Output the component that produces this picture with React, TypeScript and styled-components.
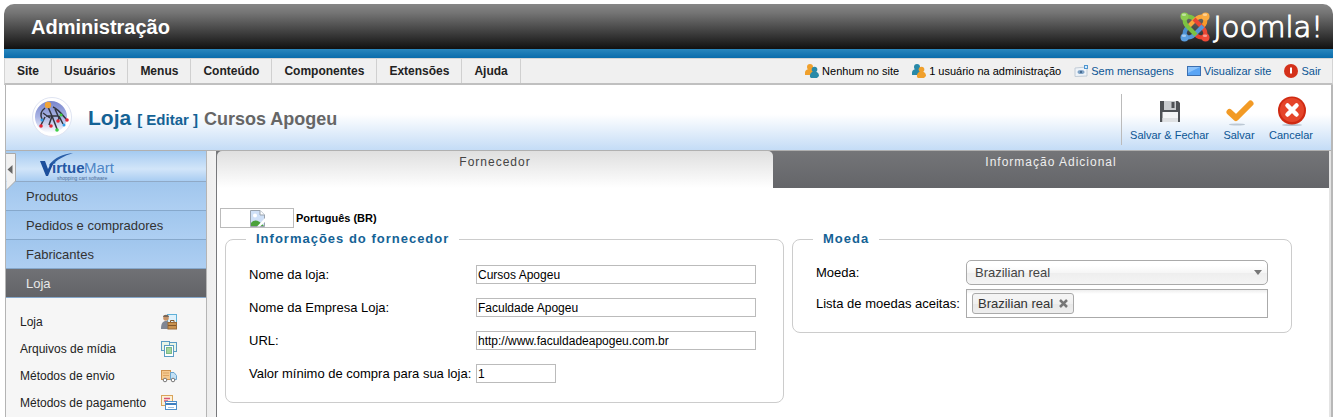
import React from "react";
import styled, { createGlobalStyle, css } from "styled-components";

const GlobalStyle = createGlobalStyle`
  *, *::before, *::after { box-sizing: border-box; }
  body {
    margin: 0;
    background: #fff;
    color: #000;
    font: 13px/18px "Liberation Sans", Arial, sans-serif;
  }
  button, input, select { font: inherit; color: inherit; margin: 0; }
  a { text-decoration: none; color: inherit; }
`;

const Page = styled.div`
  display: flex;
  flex-direction: column;
  min-height: 100vh;
  padding: 4px 1px 0 4px;
`;

const Banner = styled.header`
  display: flex;
  align-items: center;
  justify-content: space-between;
  height: 45px;
  padding: 0 10px 0 27px;
  border-radius: 10px 10px 0 0;
  background: linear-gradient(#868686, #747474 20%, #111);
`;

const SiteName = styled.h1`
  margin: 0;
  color: #fff;
  font-size: 20px;
  line-height: 24px;
`;

const JoomlaBrand = styled.a`
  display: flex;
  align-items: center;
  gap: 3px;
  color: #fff;
`;

const Wordmark = styled.span`
  font: 200 29px/32px "DejaVu Sans", sans-serif;
  -webkit-text-stroke: 1px #fff;
`;

const BlueStripe = styled.div`
  height: 9px;
  background: linear-gradient(#2a86bd, #0a6cab);
`;

const MenuBar = styled.div`
  display: flex;
  justify-content: space-between;
  height: 27px;
  border: 1px solid #d4d4d4;
  border-bottom: 2px solid #c0c0c0;
  background: #f0f0f0;
`;

const Menu = styled.nav`
  display: flex;
`;

const MenuItem = styled.button`
  padding: 0 12px;
  border: 0;
  border-right: 1px solid #d0d0d0;
  background: none;
  color: #222;
  font-size: 12px;
  font-weight: bold;
`;

const StatusList = styled.div`
  display: flex;
  align-items: center;
  gap: 13px;
  padding-right: 11px;
  font-size: 11px;
`;

const statusItem = css`
  display: flex;
  align-items: center;
  gap: 3px;
`;

const StatusText = styled.span`
  ${statusItem}
`;

const StatusLink = styled.a`
  ${statusItem}
  color: #0b5594;
`;

const Frame = styled.main`
  display: flex;
  flex: 1;
  flex-direction: column;
  margin-left: 1px;
  border-left: 1px solid #b4b4b4;
  border-right: 2px solid #b8b8b8;
`;

const TitleBar = styled.div`
  display: flex;
  align-items: center;
  justify-content: space-between;
  height: 66px;
  padding: 0 12px 0 24px;
  border-bottom: 1px solid #b0b0b0;
  border-radius: 6px 6px 0 0;
  background: linear-gradient(#fff 45%, #c4dcf6);
`;

const TitleGroup = styled.div`
  display: flex;
  align-items: center;
  gap: 14px;
`;

const Title = styled.h2`
  display: flex;
  align-items: baseline;
  gap: 6px;
  margin: 0;
  padding-top: 2px;
  color: #146295;
  font-size: 21px;
  line-height: 28px;
`;

const TitleAction = styled.small`
  font-size: 15px;
`;

const TitleName = styled.span`
  color: #666;
  font-size: 18px;
`;

const Toolbar = styled.div`
  display: flex;
  gap: 2px;
  height: 51px;
  margin-top: 3px;
  padding-left: 2px;
  border-left: 1px solid #bbb;
`;

const Tool = styled.button`
  display: flex;
  flex-direction: column;
  align-items: center;
  padding: 2px 6px;
  border: 0;
  background: none;
  color: #0b5594;
  font-size: 11px;
  line-height: 14px;
`;

const Body = styled.div`
  display: flex;
  flex: 1;
  border-right: 2px solid #e4e4e4;
`;

const Sidebar = styled.aside`
  position: relative;
  flex: 0 0 201px;
  border-right: 1px solid #b5b5b5;
  background: #f6f6f6;
`;

const CollapseHandle = styled.button`
  position: absolute;
  top: 2px;
  left: 0;
  padding: 0;
  border: 0;
  background: none;
  line-height: 0;
`;

const VmBrand = styled.div`
  height: 31px;
  padding-left: 33px;
  border-bottom: 1px solid #8fa9c6;
  background: linear-gradient(#a4caf1, #d2e5f9 60%, #a9cdf2);
`;

const Section = styled.a<{ $active?: boolean }>`
  display: block;
  height: 29px;
  padding-left: 20px;
  border-bottom: 1px solid #86a8cb;
  background: ${(p) =>
    p.$active
      ? "linear-gradient(#707175, #626367)"
      : "linear-gradient(#a0c6ed, #aecff2)"};
  color: ${(p) => (p.$active ? "#e8e8e8" : "#333")};
  line-height: 30px;
`;

const SubMenu = styled.ul`
  margin: 0;
  padding: 10px 29px 0 14px;
  list-style: none;
`;

const SubLink = styled.a`
  display: flex;
  align-items: center;
  justify-content: space-between;
  height: 27px;
  color: #222;
  font-size: 12px;
  white-space: nowrap;
`;

const Gutter = styled.div`
  flex: 0 0 10px;
  border-right: 1px solid #77787b;
  background: linear-gradient(90deg, #eee, #f2f2f2);
`;

const Content = styled.section`
  flex: 1;
  min-width: 0;
`;

const Tabs = styled.div`
  display: grid;
  grid-template-columns: 1fr 1fr;
  height: 37px;
  background: linear-gradient(#747578, #646569);
`;

const Tab = styled.button<{ $active?: boolean }>`
  display: flex;
  justify-content: center;
  padding: 2px 0 0;
  border: 0;
  border-radius: 5px 5px 0 0;
  background: ${(p) =>
    p.$active ? "linear-gradient(#dfdfdf, #fff)" : "none"};
  color: ${(p) => (p.$active ? "#444" : "#eee")};
  font-size: 12px;
  letter-spacing: 1px;
`;

const Language = styled.div`
  display: flex;
  align-items: center;
  gap: 2px;
  height: 20px;
  margin: 20px 0 0 3px;
  font-size: 11px;
`;

const Flag = styled.span`
  display: flex;
  align-items: flex-end;
  justify-content: center;
  width: 74px;
  height: 20px;
  border: 1px solid #bbb;
`;

const Groups = styled.div`
  display: grid;
  grid-template-columns: 559fr 500fr;
  align-items: start;
  gap: 8px;
  padding: 2px 37px 14px 8px;
`;

const Group = styled.fieldset<{ $compact?: boolean }>`
  min-width: 0;
  margin: 0;
  padding: ${(p) => (p.$compact ? "9px 23px 13px" : "10px 23px 12px")};
  border: 1px solid #ccc;
  border-radius: 8px;
`;

const GroupTitle = styled.legend`
  margin-left: -3px;
  padding: 0 10px;
  color: #146295;
  font-weight: bold;
  letter-spacing: 1px;
`;

const Field = styled.div<{ $labelWidth: number; $height: number }>`
  display: grid;
  grid-template-columns: ${(p) => p.$labelWidth}px 1fr;
  align-items: center;
  height: ${(p) => p.$height}px;
  white-space: nowrap;
`;

const TextBox = styled.input<{ $short?: boolean }>`
  width: ${(p) => (p.$short ? "80px" : "100%")};
  max-width: 280px;
  height: 19px;
  padding: 0 1px;
  border: 1px solid #bbb;
  border-radius: 0;
  background: #fff;
  font-size: 12px;
`;

const SelectWrap = styled.div`
  position: relative;

  svg {
    position: absolute;
    top: 10px;
    right: 6px;
    pointer-events: none;
  }
`;

const Select = styled.select`
  display: block;
  width: 100%;
  height: 25px;
  padding: 0 8px;
  border: 1px solid #aaa;
  border-radius: 5px;
  appearance: none;
  background: linear-gradient(#fff 20%, #f6f6f6 50%, #eee 52%, #f4f4f4);
  color: #444;
`;

const TokenBox = styled.div`
  display: flex;
  align-items: center;
  gap: 4px;
  height: 29px;
  padding: 0 5px;
  border: 1px solid #aaa;
  background: linear-gradient(#eee, #fff 15%);
`;

const Token = styled.span`
  display: flex;
  align-items: center;
  gap: 6px;
  height: 21px;
  padding: 0 5px;
  border: 1px solid #aaa;
  border-radius: 3px;
  background: linear-gradient(#f4f4f4 20%, #f0f0f0 50%, #e8e8e8 52%, #eee);
  color: #333;
`;

const RemoveToken = styled.button`
  padding: 0;
  border: 0;
  background: none;
  line-height: 0;
`;

const TokenInput = styled.input`
  flex: 1;
  min-width: 0;
  border: 0;
  outline: 0;
  background: none;
`;

const JoomlaMark = () => (
  <svg width="30" height="30" viewBox="0 0 30 30" fill="none" strokeWidth="4.200" strokeLinejoin="round">
    <path d="M5 5 C10 4 12 5 15 8" stroke="#7cc242" />
    <path d="M25 5 C26 10 25 12 22 15" stroke="#f79a2b" />
    <path d="M25 25 C20 26 18 25 15 22" stroke="#e8432f" />
    <path d="M5 25 C4 20 5 18 8 15" stroke="#4b8fd0" />
    <path d="M25 5 C20 4 18 5 15 8 L7 16" stroke="#fba53a" />
    <path d="M25 25 C26 20 25 18 22 15 L14 7" stroke="#ea4733" />
    <path d="M5 25 C10 26 12 25 15 22 L23 14" stroke="#5596d8" />
    <path d="M5 5 C4 10 5 12 8 15 L16 23" stroke="#7cc242" />
    <circle cx="4.500" cy="4.500" r="4" fill="#8ccb50" />
    <circle cx="25.500" cy="4.500" r="4" fill="#fbab41" />
    <circle cx="4.500" cy="25.500" r="4" fill="#5a9ee0" />
    <circle cx="25.500" cy="25.500" r="4" fill="#ee4a38" />
    <g fill="#fff" opacity=".45">
      <ellipse cx="4" cy="2.800" rx="2.200" ry="1.200" />
      <ellipse cx="25" cy="2.800" rx="2.200" ry="1.200" />
      <ellipse cx="4" cy="23.800" rx="2.200" ry="1.200" />
      <ellipse cx="25" cy="23.800" rx="2.200" ry="1.200" />
    </g>
  </svg>
);

const Users = ({ back, front }: { back: string; front: string }) => (
  <svg width="14" height="14" viewBox="0 0 14 14">
    <circle cx="5" cy="3" r="3" fill={back} />
    <path d="M0 11 V9 C0 6 2 5 5 5 C8 5 9 7 9 9 V11Z" fill={back} />
    <circle cx="9.500" cy="5.500" r="2.800" fill={front} />
    <path d="M5 13 C4.500 9 7 7.500 9.500 7.500 C13 7.500 14 10 14 12 L12 14 H6Z" fill={front} />
  </svg>
);

const Mail = () => (
  <svg width="14" height="14" viewBox="0 0 14 14">
    <path d="M1 4 L13 3 L13 12 L1 12.500Z" fill="#eef3f8" stroke="#c2ccd6" />
    <ellipse cx="7" cy="8" rx="3.500" ry="2" fill="#7fa3c6" />
    <circle cx="7" cy="8" r="1" fill="#35597e" />
    <rect x="10.500" y="1.500" width="3" height="3" fill="#d6ecff" stroke="#4f97d0" />
  </svg>
);

const Screen = () => (
  <svg width="14" height="14" viewBox="0 0 14 14">
    <rect x=".5" y="2.500" width="13" height="9" fill="#5aa5f5" stroke="#3b6fb0" />
    <path d="M1 3 H13 L1 9Z" fill="#8cc3fb" />
  </svg>
);

const Power = () => (
  <svg width="14" height="14" viewBox="0 0 14 14">
    <circle cx="7" cy="7" r="7" fill="#d4311a" />
    <path d="M7 3.500 V9.500" stroke="#fff" strokeWidth="2" />
  </svg>
);

const StoreEmblem = () => (
  <svg width="44" height="44" viewBox="0 0 44 44">
    <defs>
      <linearGradient id="disc" x1="0" y1="0" x2="0" y2="1">
        <stop offset="0" stopColor="#7885cc" />
        <stop offset=".5" stopColor="#a9b4e4" />
        <stop offset="1" stopColor="#fff" />
      </linearGradient>
    </defs>
    <circle cx="22" cy="21" r="19.500" fill="#fff" stroke="#dfe4f2" />
    <circle cx="21" cy="21" r="16" fill="url(#disc)" />
    <g fill="none" stroke="#33353f" strokeWidth="1.500">
      <path d="M18 11 L22 20 L19 29 M22 20 L27 33 M15 12 C11 15 10 19 12 23 M13 17 L20 22 M15 21 L11 29 M23 11 C28 13 31 17 36 23 M25 13 L29 22 L28 25 M29 20 L33 28 M16 20 L28 20" />
    </g>
    <circle cx="18" cy="9" r="3.200" fill="#f0a437" />
    <g fill="#e32636">
      <circle cx="11" cy="30" r="1.800" />
      <circle cx="21" cy="30" r="1.800" />
      <circle cx="28" cy="25" r="1.800" />
      <circle cx="37" cy="24" r="1.800" />
    </g>
    <g fill="#2f9be8">
      <circle cx="12" cy="24" r="1.500" />
      <circle cx="34" cy="29" r="1.500" />
    </g>
    <g fill="#3fcf46">
      <circle cx="31" cy="19" r="1.600" />
      <circle cx="27" cy="34" r="1.800" />
    </g>
  </svg>
);

const Floppy = () => (
  <svg width="32" height="32" viewBox="0 0 32 32">
    <path d="M6 5 H24 L26 7 V26 H6Z" fill="#4e5155" />
    <path d="M10 5 H22 V14 H10Z" fill="#c9cccf" />
    <path d="M17.500 6 H20.500 V12 H17.500Z" fill="#4e5155" />
    <path d="M8.500 16 H24 V26 H8.500Z" fill="#f4f5f6" />
    <path d="M8.500 22 H24 V26 H8.500Z" fill="#dfe1e3" />
  </svg>
);

const Check = () => (
  <svg width="32" height="32" viewBox="0 0 32 32">
    <ellipse cx="14" cy="28.500" rx="8" ry="1" fill="#bcc8d4" />
    <path d="M6.500 16 L13 22 L27.500 7.500" fill="none" stroke="#f29a25" strokeWidth="6" strokeLinejoin="round" strokeLinecap="round" />
  </svg>
);

const Cancel = () => (
  <svg width="32" height="32" viewBox="0 0 32 32">
    <ellipse cx="17" cy="29" rx="10" ry="1" fill="#b9c4d0" />
    <circle cx="17" cy="14.500" r="14" fill="#cf2a12" />
    <circle cx="17" cy="14" r="12" fill="#e5452a" />
    <path d="M12.500 9.500 L21.500 18.500 M21.500 9.500 L12.500 18.500" stroke="#fff" strokeWidth="4.500" strokeLinecap="round" />
  </svg>
);

const VirtueMartLogo = () => (
  <svg width="84" height="30" viewBox="0 0 84 30" fontFamily="Liberation Sans, Arial, sans-serif">
    <path d="M10 14 C16 6 24 3 34 2 C25 5 18 8 12 16Z" fill="#2a5ea8" />
    <path d="M1 10 H6 L9 18 L12 12 L14 13 L9 25 H7Z" fill="#1c4f9c" />
    <text x="13" y="22" fontSize="15" fontWeight="bold" fill="#2458a4">irtue</text>
    <text x="45" y="22" fontSize="15" fill="#4f86c6">Mart</text>
    <text x="18" y="29" fontSize="5" fill="#4c6c94">shopping cart software</text>
  </svg>
);

const Handle = () => (
  <svg width="11" height="38" viewBox="0 0 11 38">
    <path d="M0 .5 H9.500 V28 L.5 37" fill="#f1f1f1" stroke="#a9a9a9" />
    <path d="M6.500 12 V21 L1.500 16.500Z" fill="#666" />
  </svg>
);

const BrokenImage = () => (
  <svg width="15" height="17" viewBox="0 0 15 17">
    <path d="M.5 .5 H10 L14.500 5 V16.500 H.5Z" fill="#cfe0f7" stroke="#9aa3ad" />
    <path d="M10 .5 V5 H14.500" fill="#fff" stroke="#9aa3ad" />
    <circle cx="5" cy="5.500" r="2" fill="#fff" />
    <path d="M1 16 V13 C5 9 8 10 14 16Z" fill="#4aa13c" />
    <path d="M15 8 L7 16.500 H10 L15 12Z" fill="#fff" />
  </svg>
);

const StoreIcon = () => (
  <svg width="16" height="16" viewBox="0 0 16 16">
    <rect x="6.500" y=".5" width="9" height="10" fill="#dff1fb" stroke="#5fb0d8" />
    <circle cx="5" cy="4" r="2.800" fill="#c99468" />
    <path d="M2 3 C2 0 8 0 8 3Z" fill="#7a685a" />
    <path d="M0 15 C0 9 2 7 5 7 C8 7 9 9 9 15Z" fill="#808794" />
    <rect x="7" y="8.500" width="8.500" height="6.500" fill="#c9924f" stroke="#9a6a36" />
    <path d="M9.500 8 V6.500 H13 V8 M7 11.500 H15" fill="none" stroke="#80572c" />
  </svg>
);

const MediaIcon = () => (
  <svg width="16" height="16" viewBox="0 0 16 16" fill="#e9f5e6" stroke="#5b9cc4">
    <rect x=".5" y=".5" width="8" height="9" />
    <rect x="8.500" y="1.500" width="7" height="9" />
    <rect x="3.500" y="4.500" width="9" height="11" fill="#fff" />
    <rect x="5.500" y="6.500" width="5" height="6" fill="#a5d59b" stroke="#7bb88a" />
  </svg>
);

const TruckIcon = () => (
  <svg width="16" height="16" viewBox="0 0 16 16">
    <rect x=".5" y="2.500" width="9" height="9" fill="#f6c98e" stroke="#cf9350" />
    <path d="M9.500 4.500 H13 L15.500 7.500 V11.500 H9.500Z" fill="#c2e0f5" stroke="#6aa5cf" />
    <path d="M2 5 H8 M2 7.500 H8" stroke="#dca565" />
    <circle cx="4" cy="12" r="1.800" fill="#fff" stroke="#777" />
    <circle cx="12" cy="12" r="1.800" fill="#fff" stroke="#777" />
  </svg>
);

const PaymentIcon = () => (
  <svg width="16" height="16" viewBox="0 0 16 16">
    <rect x=".5" y=".5" width="11" height="10" fill="#fdf0d6" stroke="#d9a45b" />
    <path d="M3 3.500 H9 M3 6 H7" stroke="#d5527a" strokeWidth="1.500" />
    <rect x="4.500" y="6.500" width="11" height="8" fill="#fff" stroke="#4f8fc9" />
    <path d="M5 9 H15" stroke="#3f7fc0" strokeWidth="2" />
    <path d="M7 12.500 H13" stroke="#9fc0df" />
  </svg>
);

const menus = ["Site", "Usuários", "Menus", "Conteúdo", "Componentes", "Extensões", "Ajuda"];

const subItems = [
  { label: "Loja", Icon: StoreIcon },
  { label: "Arquivos de mídia", Icon: MediaIcon },
  { label: "Métodos de envio", Icon: TruckIcon },
  { label: "Métodos de pagamento", Icon: PaymentIcon },
];

const vendorFields = [
  { id: "store-name", label: "Nome da loja:", value: "Cursos Apogeu" },
  { id: "company-name", label: "Nome da Empresa Loja:", value: "Faculdade Apogeu" },
  { id: "store-url", label: "URL:", value: "http://www.faculdadeapogeu.com.br" },
  { id: "min-order", label: "Valor mínimo de compra para sua loja:", value: "1", short: true },
];

export default function App() {
  return (
    <Page>
      <GlobalStyle />
      <Banner>
        <SiteName>Administração</SiteName>
        <JoomlaBrand href="#joomla">
          <JoomlaMark />
          <Wordmark>Joomla!</Wordmark>
        </JoomlaBrand>
      </Banner>
      <BlueStripe />
      <MenuBar>
        <Menu>
          {menus.map((m) => (
            <MenuItem key={m} type="button">{m}</MenuItem>
          ))}
        </Menu>
        <StatusList>
          <StatusText><Users back="#f0a02c" front="#2889a8" />Nenhum no site</StatusText>
          <StatusText><Users back="#2889a8" front="#f0a02c" />1 usuário na administração</StatusText>
          <StatusLink href="#mensagens"><Mail />Sem mensagens</StatusLink>
          <StatusLink href="#site"><Screen />Visualizar site</StatusLink>
          <StatusLink href="#sair"><Power />Sair</StatusLink>
        </StatusList>
      </MenuBar>

      <Frame>
        <TitleBar>
          <TitleGroup>
            <StoreEmblem />
            <Title>
              Loja <TitleAction>[ Editar ]</TitleAction> <TitleName>Cursos Apogeu</TitleName>
            </Title>
          </TitleGroup>
          <Toolbar>
            <Tool type="button"><Floppy />Salvar &amp; Fechar</Tool>
            <Tool type="button"><Check />Salvar</Tool>
            <Tool type="button"><Cancel />Cancelar</Tool>
          </Toolbar>
        </TitleBar>

        <Body>
          <Sidebar>
            <VmBrand><VirtueMartLogo /></VmBrand>
            <nav>
              <Section href="#produtos">Produtos</Section>
              <Section href="#pedidos">Pedidos e compradores</Section>
              <Section href="#fabricantes">Fabricantes</Section>
              <Section href="#loja" $active>Loja</Section>
              <SubMenu>
                {subItems.map(({ label, Icon }) => (
                  <li key={label}>
                    <SubLink href="#loja">{label}<Icon /></SubLink>
                  </li>
                ))}
              </SubMenu>
            </nav>
            <CollapseHandle type="button" aria-label="Recolher menu"><Handle /></CollapseHandle>
          </Sidebar>
          <Gutter />
          <Content>
            <Tabs role="tablist">
              <Tab type="button" role="tab" aria-selected="true" $active>Fornecedor</Tab>
              <Tab type="button" role="tab" aria-selected="false">Informação Adicional</Tab>
            </Tabs>
            <Language>
              <Flag><BrokenImage /></Flag>
              <strong>Português (BR)</strong>
            </Language>
            <Groups>
              <Group>
                <GroupTitle>Informações do fornecedor</GroupTitle>
                {vendorFields.map((f) => (
                  <Field key={f.id} $labelWidth={227} $height={33}>
                    <label htmlFor={f.id}>{f.label}</label>
                    <TextBox id={f.id} type="text" defaultValue={f.value} $short={f.short} />
                  </Field>
                ))}
              </Group>
              <Group $compact>
                <GroupTitle>Moeda</GroupTitle>
                <Field $labelWidth={150} $height={31}>
                  <label htmlFor="currency">Moeda:</label>
                  <SelectWrap>
                    <Select id="currency" defaultValue="brl">
                      <option value="brl">Brazilian real</option>
                    </Select>
                    <svg width="8" height="5" viewBox="0 0 8 5"><path d="M0 0 H8 L4 5Z" fill="#777" /></svg>
                  </SelectWrap>
                </Field>
                <Field $labelWidth={150} $height={31}>
                  <label htmlFor="accepted">Lista de moedas aceitas:</label>
                  <TokenBox>
                    <Token>
                      Brazilian real
                      <RemoveToken type="button" aria-label="Remover Brazilian real">
                        <svg width="9" height="9" viewBox="0 0 9 9"><path d="M1 1 L8 8 M8 1 L1 8" stroke="#777" strokeWidth="2.500" /></svg>
                      </RemoveToken>
                    </Token>
                    <TokenInput id="accepted" type="text" />
                  </TokenBox>
                </Field>
              </Group>
            </Groups>
          </Content>
        </Body>
      </Frame>
    </Page>
  );
}
